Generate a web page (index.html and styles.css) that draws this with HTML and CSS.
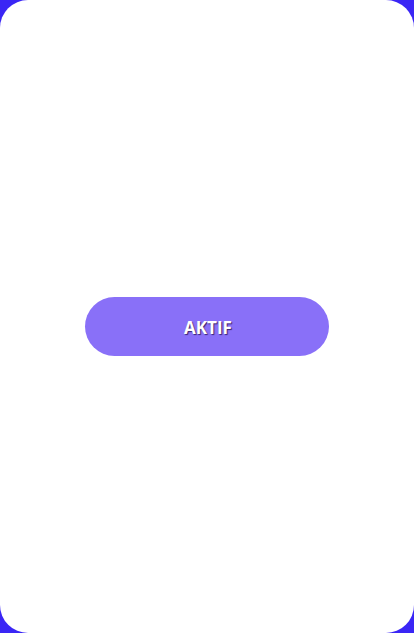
FILE: index.html
```html
<!DOCTYPE html>
<html>
<head>
<meta charset="utf-8">
<link rel="stylesheet" href="styles.css">
</head>
<body>
<div class="screen">
  <button class="btn">AKTIF</button>
</div>
</body>
</html>
```
FILE: styles.css
```css
html, body {
  margin: 0;
  padding: 0;
  width: 414px;
  height: 633px;
  background: #3a26f5;
}
.screen {
  width: 414px;
  height: 633px;
  background: #ffffff;
  border-radius: 28px;
  display: flex;
  align-items: center;
  justify-content: center;
  box-sizing: border-box;
  padding-top: 20px;
}
.btn {
  width: 244px;
  height: 59px;
  border: none;
  border-radius: 29.5px;
  background: #8970f8;
  color: #ffffff;
  font-family: "Open Sans", sans-serif;
  font-weight: 700;
  font-size: 17px;
  line-height: 59px;
  text-shadow: 1px 1px 1px rgba(30, 10, 70, 0.75);
  padding: 1px 0 0 2px;
  margin: 0;
}
```
